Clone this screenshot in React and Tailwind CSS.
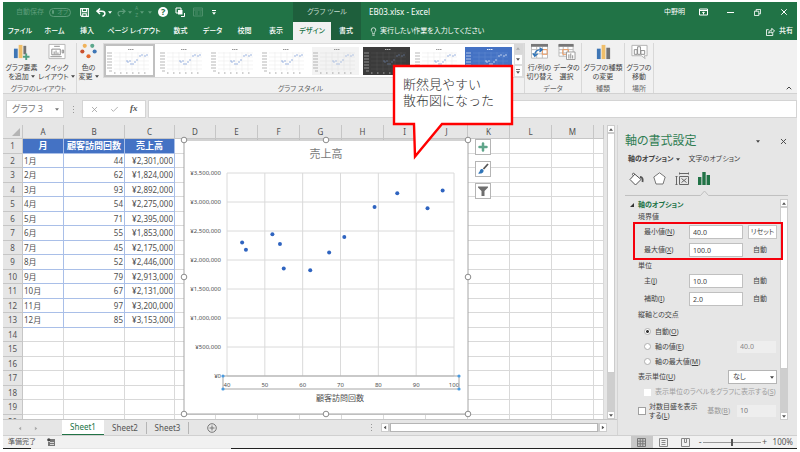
import { ChevronUp, Lightbulb, X, Check, Plus } from 'lucide-react';

const ROWS = [
  ['1月', 44, 2301000],
  ['2月', 62, 1824000],
  ['3月', 93, 2892000],
  ['4月', 54, 2275000],
  ['5月', 71, 2395000],
  ['6月', 55, 1853000],
  ['7月', 45, 2175000],
  ['8月', 52, 2446000],
  ['9月', 79, 2913000],
  ['10月', 67, 2131000],
  ['11月', 97, 3200000],
  ['12月', 85, 3153000],
];

const COLUMNS = ['A', 'B', 'C', 'D', 'E', 'F', 'G', 'H', 'I', 'J', 'K', 'L', 'M', ''];

const yen = (value) => `¥${value.toLocaleString('en-US')}`;

function Caret({ className = '' }) {
  return (
    <svg viewBox="0 0 6 4" className={`inline-block w-[4px] h-[3px] shrink-0 ${className}`} aria-hidden="true">
      <path d="M0 0h6L3 4z" fill="currentColor" />
    </svg>
  );
}

/**
 * Title bar with quick access buttons and the window controls
 */
function TitleBar() {
  return (
    <header className="flex h-[20px] bg-[#217346] text-white text-[8px] leading-[12px]">
      <div className="flex items-center w-[290px] pl-[13px]">
        <label className="flex items-center gap-[5px] text-[7px] text-[#5d9c7a]">
          自動保存
          <button type="button" className="flex items-center gap-[3px] w-[22px] h-[9px] px-[2px] rounded-full border border-[#5d9c7a]">
            <span className="w-[4px] h-[4px] rounded-full bg-[#5d9c7a]" />
            <span className="text-[6px] leading-[7px]">オフ</span>
          </button>
        </label>
        <button type="button" aria-label="上書き保存" className="ml-[9px]">
          <svg viewBox="0 0 10 10" className="w-[9px] h-[9px]" fill="none" stroke="white" strokeWidth="1.2">
            <path d="M.7.7h8.6v8.6H2L.7 8zM2.7 1v3h4.6V1M3 9V6.4h4V9" />
          </svg>
        </button>
        <button type="button" aria-label="元に戻す" className="flex items-center gap-[2px] ml-[7px]">
          <svg viewBox="0 0 10 9" className="w-[10px] h-[9px]" fill="none" stroke="white" strokeWidth="1.5">
            <path d="M4 .5 1 3.2 4 6M1 3.2h5c4 0 3.5 4.5.5 5" />
          </svg>
          <Caret />
        </button>
        <button type="button" aria-label="やり直し" className="flex items-center gap-[2px] ml-[5px] text-[#5d9c7a]">
          <svg viewBox="0 0 10 9" className="w-[9px] h-[9px]" fill="none" stroke="currentColor" strokeWidth="1.3">
            <path d="M6 .5 9 3.2 6 6M9 3.2H4C0 3.2.5 7.7 3.5 8.2" />
          </svg>
          <Caret />
        </button>
        <button type="button" aria-label="並べ替え" className="flex items-center gap-[2px] ml-[3px] text-[#5d9c7a]">
          <span className="flex flex-col text-[5px] leading-[7px]">
            <span>A</span>
            <span>Z</span>
          </span>
          <Caret />
          <Caret className="ml-[2px]" />
        </button>
        <button type="button" aria-label="ヘルプ" className="flex items-center justify-center w-[10px] h-[10px] ml-[6px] rounded-full bg-white text-[#217346] text-[9px] leading-[10px] font-bold">
          ?
        </button>
        <button type="button" aria-label="オブジェクトの選択" className="ml-[7px]">
          <svg viewBox="0 0 10 10" className="w-[10px] h-[10px]">
            <path d="M1 1h5v5H1z" fill="none" stroke="white" />
            <path d="M3 3h4.5v4.5H3z" fill="white" />
            <path d="M6 9.500h3.500V6" fill="none" stroke="white" />
          </svg>
        </button>
        <button type="button" aria-label="フォーム" className="ml-[8px]">
          <svg viewBox="0 0 10 10" className="w-[10px] h-[10px]" fill="none" stroke="#4c8f6a">
            <path d="M.5 1h9v8h-9zM.5 3h9M2 5h3M2 7h3M6.5 5h2M6.5 7h2" />
          </svg>
        </button>
        <button type="button" aria-label="クイック アクセスのカスタマイズ" className="flex flex-col items-center gap-[1px] ml-[9px]">
          <span className="w-[4px] h-px bg-white" />
          <Caret />
        </button>
      </div>
      <div className="flex items-center justify-center w-[68px] bg-[#1e5f3c] text-[7px] text-[#c5dccf]">グラフ ツール</div>
      <h1 className="flex items-center pl-[8px] whitespace-pre">EB03.xlsx - Excel</h1>
      <div className="flex items-center ml-auto pr-[8px]">
        <span className="text-[7px]">中野明</span>
        <button type="button" aria-label="リボンの表示オプション" className="ml-[14px]">
          <svg viewBox="0 0 9 8" className="w-[9px] h-[8px]" fill="none" stroke="white">
            <path d="M.5 1h8v6h-8zM.5 2.5h8M4.5 6.5V4M3.300 5l1.200-1.200L5.700 5" />
          </svg>
        </button>
        <button type="button" aria-label="最小化" className="w-[7px] h-px ml-[19px] bg-white" />
        <button type="button" aria-label="元に戻す (縮小)" className="ml-[20px]">
          <svg viewBox="0 0 8 8" className="w-[7px] h-[7px]" fill="none" stroke="white">
            <path d="M.5 2.5h5v5h-5zM2.5 2.5v-2h5v5h-2" />
          </svg>
        </button>
        <button type="button" aria-label="閉じる" className="ml-[18px]">
          <X className="w-[10px] h-[10px]" strokeWidth={2.4} />
        </button>
      </div>
    </header>
  );
}

/**
 * Ribbon tabs
 */
function RibbonTabs() {
  return (
    <nav className="flex h-[18px] bg-[#217346] text-white text-[7px] leading-[12px] font-medium">
      <button type="button" className="w-[34px]">ファイル</button>
      <button type="button" className="w-[35px]">ホーム</button>
      <button type="button" className="w-[30px]">挿入</button>
      <button type="button" className="w-[64px]">ページ レイアウト</button>
      <button type="button" className="w-[29px]">数式</button>
      <button type="button" className="w-[35px]">データ</button>
      <button type="button" className="w-[29px]">校閲</button>
      <button type="button" className="w-[34px]">表示</button>
      <button type="button" className="w-[38px] bg-[#f1f1f1] text-[#217346]">デザイン</button>
      <button type="button" className="w-[30px] bg-[#1e5f3c]">書式</button>
      <button type="button" className="flex items-center gap-[2px] ml-[8px] font-normal">
        <Lightbulb className="w-[9px] h-[9px]" />
        実行したい作業を入力してください
      </button>
      <button type="button" className="flex items-center gap-[4px] ml-auto mr-[4px]">
        <svg viewBox="0 0 10 10" className="w-[9px] h-[9px]" fill="none" stroke="white">
          <path d="M3 3H.5v6.500h7V7M3 7c0-2.500 1.500-3.500 3.500-3.500V1.500l3 3-3 2.500V5.500C5 5.500 4 6 3 7z" />
        </svg>
        共有
      </button>
    </nav>
  );
}

function RibbonButton({ icon, top, bottom, caret, className }) {
  return (
    <button type="button" className={`flex flex-col items-center ${className}`}>
      {icon}
      <span className="mt-[3px]">{top}</span>
      <span className="flex items-center gap-[2px]">
        {bottom}
        {caret && <Caret />}
      </span>
    </button>
  );
}

function RibbonGroup({ label, className, children }) {
  return (
    <section className={`flex flex-col h-full border-r border-[#d8d8d8] ${className}`}>
      <div className="flex justify-center h-[42px]">{children}</div>
      <h2 className="text-center text-[#666666]">{label}</h2>
    </section>
  );
}

const THUMB_POINTS = [[21, 14], [22, 15], [24, 14], [25, 17], [27, 17], [29, 15], [31, 13], [34, 9], [36, 8], [39, 9], [41, 8]];

function StyleThumb({ style }) {
  const frame = {
    plain: { bg: '#ffffff', grid: '#ececec', dot: '#8fabdd', text: '#999999' },
    soft: { bg: '#f3f3f3', grid: '#e4e4e4', dot: '#a9bde2', text: '#999999' },
    dark: { bg: '#3b3b3b', grid: '#4d4d4d', dot: '#5f6d8a', text: '#b5b5b5' },
    blue: { bg: '#4472c4', grid: '#5e86d0', dot: '#cfdcf3', text: '#e2eaf8' },
  }[style];

  return (
    <svg viewBox="0 0 47 28" className="w-[47px] h-[28px]" aria-hidden="true">
      <rect width="47" height="28" fill={frame.bg} />
      <path d="M8 6h35M8 10h35M8 14h35M8 18h35M8 22h35M14 5v19M20 5v19M26 5v19M32 5v19M38 5v19" stroke={frame.grid} strokeWidth=".6" />
      <path d="M22 2.5h6" stroke={frame.text} strokeWidth="1" strokeDasharray="1.500 .5" />
      <path d="M1 6h5M1 9h5M1 12h5M1 15h5M1 18h5M1 21h5M3 24h3" stroke={frame.text} strokeWidth=".7" />
      <path d="M8 26h35" stroke={frame.text} strokeWidth=".9" strokeDasharray="1.500 4.500" />
      {THUMB_POINTS.map(([x, y]) => (
        <circle key={x} cx={x} cy={y} r=".8" fill={frame.dot} />
      ))}
    </svg>
  );
}

function Bars({ className = '' }) {
  return (
    <svg viewBox="0 0 18 18" className={`w-[17px] h-[17px] ${className}`} aria-hidden="true">
      <path d="M2 6h4v11H2z" fill="#3f76b5" />
      <path d="M7 2h4v15H7z" fill="#f0bf6a" />
      <path d="M12 5h4v12h-4z" fill="#737373" />
    </svg>
  );
}

function Ribbon() {
  return (
    <div className="flex h-[54px] pt-[3px] bg-[#f1f1f1] border-b border-[#d2d2d2] text-[7px] leading-[9px] text-[#444444]">
      <RibbonGroup label="グラフのレイアウト" className="w-[74px] pr-[2px]">
        <RibbonButton
          className="w-[36px]"
          top="グラフ要素"
          bottom="を追加"
          caret
          icon={
            <svg viewBox="0 0 18 18" className="w-[17px] h-[17px]" aria-hidden="true">
              <path d="M1 6h4v10H1z" fill="#3f76b5" />
              <path d="M6 2h4v14H6z" fill="#f0bf6a" />
              <path d="M11 3h3v9h-3z" fill="#737373" />
              <path d="M14 11v7M10.5 14.5h7" stroke="#4fa080" strokeWidth="2" />
            </svg>
          }
        />
        <RibbonButton
          className="w-[34px]"
          top="クイック"
          bottom="レイアウト"
          caret
          icon={
            <svg viewBox="0 0 18 18" className="w-[18px] h-[17px]" fill="none" stroke="#8a8a8a" aria-hidden="true">
              <path d="M.5 1.5h17v15H.5z" fill="white" stroke="#b5b5b5" />
              <path d="M6 3.5h6M3.500 6.500h9v6h-9zM2 14.500h12M14.500 7.500h1.500v3h-1.500z" />
              <path d="M6 9v3M8 8v4M10 10v2" />
            </svg>
          }
        />
      </RibbonGroup>

      <RibbonGroup label="グラフ スタイル" className="w-[448px]">
        <RibbonButton
          className="w-[22px]"
          top="色の"
          bottom="変更"
          caret
          icon={
            <svg viewBox="0 0 18 18" className="w-[17px] h-[17px]" aria-hidden="true">
              <circle cx="5" cy="3" r="2.200" fill="#f0b35c" />
              <circle cx="13" cy="3" r="2.200" fill="#5da88d" />
              <circle cx="2.500" cy="9" r="2.200" fill="#c8502f" />
              <circle cx="15.500" cy="9" r="2.200" fill="#3f76b5" />
              <circle cx="9" cy="14" r="2.200" fill="#e5682d" />
            </svg>
          }
        />
        <div className="flex h-[35px] ml-[3px] bg-white border border-[#dcdcdc]">
          <div className="flex items-center gap-[4px] pr-[2px]">
            <button type="button" aria-label="スタイル 1" className="h-[33px] border-2 border-[#c0c0c0]">
              <StyleThumb style="plain" />
            </button>
            <button type="button" aria-label="スタイル 2"><StyleThumb style="plain" /></button>
            <button type="button" aria-label="スタイル 3"><StyleThumb style="plain" /></button>
            <button type="button" aria-label="スタイル 4"><StyleThumb style="plain" /></button>
            <button type="button" aria-label="スタイル 5"><StyleThumb style="soft" /></button>
            <button type="button" aria-label="スタイル 6"><StyleThumb style="dark" /></button>
            <button type="button" aria-label="スタイル 7"><StyleThumb style="plain" /></button>
            <button type="button" aria-label="スタイル 8"><StyleThumb style="blue" /></button>
          </div>
          <div className="flex flex-col w-[9px] text-[#555555]">
            <button type="button" aria-label="前の行" className="flex flex-1 items-center justify-center bg-[#d8d8d8] text-[#aaaaaa]">
              <Caret className="rotate-180" />
            </button>
            <button type="button" aria-label="次の行" className="flex flex-1 items-center justify-center border border-[#dcdcdc]">
              <Caret />
            </button>
            <button type="button" aria-label="その他" className="flex flex-col flex-1 items-center justify-center gap-[1px] border border-[#dcdcdc]">
              <span className="w-[4px] h-px bg-[#777777]" />
              <Caret />
            </button>
          </div>
        </div>
      </RibbonGroup>

      <RibbonGroup label="データ" className="w-[57px]">
        <RibbonButton
          className="w-[27px]"
          top="行/列の"
          bottom="切り替え"
          icon={
            <svg viewBox="0 0 18 18" className="w-[17px] h-[17px]" fill="none" aria-hidden="true">
              <path d="M.5 2h17v14H.5zM.5 7h17M.5 11.5h17M6 4v12M12 4v12" fill="white" stroke="#b9b9b9" />
              <path d="M0 1h18v3H0z" fill="#777777" />
              <path d="M12 7h5v5h-5z" stroke="#ef9a5d" />
              <path d="M4 13c0-4 2-6 7-6M9 5l3 2-3 2.5M2 11l2 3 3-2.5" stroke="#2f74b8" strokeWidth="1.4" />
            </svg>
          }
        />
        <RibbonButton
          className="w-[27px]"
          top="データの"
          bottom="選択"
          icon={
            <svg viewBox="0 0 18 18" className="w-[18px] h-[17px]" fill="none" aria-hidden="true">
              <path d="M.5 2h15v12H.5zM.5 7h15M.5 10.5h15M5 4v10M10 4v10" fill="white" stroke="#b9b9b9" />
              <path d="M0 1h16v3H0z" fill="#777777" />
              <path d="M4.500 7h6v5h-6z" stroke="#ef9a5d" />
              <path d="M8.500 9.500h9v8h-9z" fill="white" stroke="#999999" />
              <path d="M11 12v4.500M13 11v5.500M15 13v3.500" stroke="#888888" />
            </svg>
          }
        />
      </RibbonGroup>

      <RibbonGroup label="種類" className="w-[43px]">
        <RibbonButton className="w-[40px]" top="グラフの種類" bottom="の変更" icon={<Bars />} />
      </RibbonGroup>

      <RibbonGroup label="場所" className="w-[29px]">
        <RibbonButton
          className="w-[27px]"
          top="グラフの"
          bottom="移動"
          icon={
            <svg viewBox="0 0 18 18" className="w-[17px] h-[17px]" fill="none" stroke="#8a8a8a" aria-hidden="true">
              <path d="M1 2.5h16v11h-3l1 3-4-3H1z" fill="white" stroke="#b0b0b0" />
              <path d="M3.5 7h3v5h-3zM7 4h3v8H7zM10.5 8h4v4h-4z" />
            </svg>
          }
        />
      </RibbonGroup>

      <button type="button" aria-label="リボンを折りたたむ" className="self-end ml-auto mr-[4px] mb-[1px]">
        <ChevronUp className="w-[8px] h-[8px]" strokeWidth={3} />
      </button>
    </div>
  );
}

function FormulaBar() {
  return (
    <div className="flex h-[31px] pt-[6px] pb-[7px] pl-[3px] bg-[#e6e6e6] text-[9px] text-[#777777]">
      <button type="button" className="flex items-center justify-between w-[58px] pl-[5px] pr-[4px] bg-white border border-[#d4d4d4]">
        グラフ 3
        <Caret />
      </button>
      <span className="flex flex-col justify-center gap-[2px] ml-[9px]">
        <span className="w-px h-px bg-[#999999]" />
        <span className="w-px h-px bg-[#999999]" />
        <span className="w-px h-px bg-[#999999]" />
      </span>
      <div className="flex items-center justify-around w-[64px] ml-[8px] px-[2px] bg-white border border-[#d4d4d4]">
        <button type="button" aria-label="キャンセル"><X className="w-[9px] h-[9px] text-[#999999]" /></button>
        <button type="button" aria-label="入力"><Check className="w-[9px] h-[9px] text-[#999999]" /></button>
        <button type="button" aria-label="関数の挿入" className="font-['Liberation_Serif',serif] italic font-bold text-[9px] text-[#555555]">fx</button>
      </div>
      <input aria-label="数式バー" className="flex-1 min-w-0 ml-[2px] bg-white border border-[#d4d4d4]" />
    </div>
  );
}

const GRID_X = [40, 50, 60, 70, 80, 90, 100];
const GRID_Y = [0, 500000, 1000000, 1500000, 2000000, 2500000, 3000000, 3500000];
const HANDLES = [[4, 4], [146, 4], [288, 4], [4, 141], [288, 141], [4, 278], [146, 278], [288, 278]];

const chartX = (value) => 47 + ((value - 40) * 227) / 60;
const chartY = (value) => 240 - (value * 203) / 3500000;

/**
 * Scatter chart: visits on the x axis, sales on the y axis
 */
function ScatterChart() {
  return (
    <svg viewBox="0 0 292 282" className="w-[292px] h-[282px]" role="img" aria-label="売上高">
      <rect x="4" y="4" width="284" height="274" fill="white" stroke="#a6a6a6" />
      <text x="146" y="22" textAnchor="middle" fontSize="11" fill="#7a7a7a">売上高</text>
      <g stroke="#dadada">
        {GRID_X.map((v) => (
          <line key={v} x1={chartX(v)} x2={chartX(v)} y1={chartY(3500000)} y2={chartY(0)} />
        ))}
        {GRID_Y.map((v) => (
          <line key={v} x1={chartX(40)} x2={chartX(100)} y1={chartY(v)} y2={chartY(v)} />
        ))}
      </g>
      <g fontSize="6" fill="#505050">
        {GRID_Y.map((v) => (
          <text key={v} x="41" y={chartY(v) + 2} textAnchor="end">{yen(v)}</text>
        ))}
        {GRID_X.map((v) => (
          <text key={v} x={chartX(v)} y="251" textAnchor="middle">{v}</text>
        ))}
      </g>
      <rect x="43" y="240" width="236" height="13" fill="none" stroke="#a6a6a6" />
      {[[43, 240], [279, 240], [43, 253], [279, 253]].map(([x, y]) => (
        <circle key={`${x}-${y}`} cx={x} cy={y} r="1.6" fill="#4a9be0" />
      ))}
      <text x="160" y="265" textAnchor="middle" fontSize="8" fill="#505050">顧客訪問回数</text>
      {ROWS.map(([month, visits, sales]) => (
        <circle key={month} cx={chartX(visits)} cy={chartY(sales)} r="2" fill="#2f64c0" />
      ))}
      {HANDLES.map(([x, y]) => (
        <circle key={`${x}-${y}`} cx={x} cy={y} r="2.8" fill="white" stroke="#8c8c8c" />
      ))}
    </svg>
  );
}

function SheetRow({ index }) {
  const data = ROWS[index - 2];
  const rest = COLUMNS.slice(3);
  const blank = 'border-r border-b border-[#d9d9d9]';
  const filled = 'border-r border-b border-[#a9bfe8]';
  const head = 'border-r border-b border-[#a9bfe8] bg-[#4472c4] text-white text-[9px] font-bold text-center';

  return (
    <tr className="h-[14px] odd:h-[15px]">
      <th className="border-r border-b border-[#c6c6c6] bg-[#e6e6e6] font-normal text-[#555555]">{index}</th>
      {index === 1 && (
        <>
          <td className={head}>月</td>
          <td className={head}>顧客訪問回数</td>
          <td className={head}>売上高</td>
        </>
      )}
      {data && (
        <>
          <td className={`${filled} pl-px`}>{data[0]}</td>
          <td className={`${filled} text-right pr-px`}>{data[1]}</td>
          <td className={`${filled} text-right pr-px`}>{yen(data[2])}</td>
        </>
      )}
      {index > 13 && (
        <>
          <td className={blank} />
          <td className={blank} />
          <td className={blank} />
        </>
      )}
      {rest.map((name) => (
        <td key={name} className={blank} />
      ))}
    </tr>
  );
}

function ChartButtons() {
  const box = 'flex items-center justify-center w-[16px] h-[16px] bg-white border border-[#b5b5b5]';
  return (
    <div className="absolute left-[472px] top-[14px] flex flex-col gap-[6px]">
      <button type="button" aria-label="グラフ要素" className={box}>
        <Plus className="w-[12px] h-[12px] text-[#5fa58a]" strokeWidth={5} />
      </button>
      <button type="button" aria-label="グラフ スタイル" className={box}>
        <svg viewBox="0 0 12 12" className="w-[12px] h-[12px]">
          <path d="M11 1 6.500 6" stroke="#555555" strokeWidth="1.800" />
          <path d="M6.500 7c-1-1.500-3-1-3.500.5S2 9.500 1 10.500c2.500.5 6 0 5.500-3.500z" fill="#2f74b8" />
        </svg>
      </button>
      <button type="button" aria-label="グラフ フィルター" className={box}>
        <svg viewBox="0 0 12 12" className="w-[12px] h-[12px]">
          <path d="M1 1.500h10v1L7.500 6v5h-3V6L1 2.500z" fill="#6e6e6e" />
        </svg>
      </button>
    </div>
  );
}

function VerticalScroll({ thumb, className = '' }) {
  const arrow = 'flex items-center justify-center w-[8px] h-[8px] bg-white border border-[#cccccc] text-[#555555]';
  return (
    <div className={`flex flex-col w-[8px] shrink-0 bg-[#cecece] ${className}`}>
      <button type="button" aria-label="上へスクロール" className={arrow}><Caret className="rotate-180" /></button>
      <div className={`bg-white border border-[#cccccc] ${thumb}`} />
      <button type="button" aria-label="下へスクロール" className={`${arrow} mt-auto`}><Caret /></button>
    </div>
  );
}

function Sheet() {
  return (
    <main className="flex flex-col flex-1 min-w-0">
      <div className="flex h-[294px]">
        <div className="relative flex-1 min-w-0 overflow-hidden bg-white">
          <table className="w-full table-fixed border-separate border-spacing-0 text-[8px] leading-[12px] text-[#505050]">
            <colgroup>
              <col className="w-[20px]" />
              <col className="w-[41px]" />
              <col className="w-[61px]" />
              <col className="w-[50px]" />
              <col className="w-[41px]" />
              <col className="w-[42px]" />
              <col className="w-[42px]" />
              <col className="w-[42px]" />
              <col className="w-[42px]" />
              <col className="w-[42px]" />
              <col className="w-[42px]" />
              <col className="w-[42px]" />
              <col className="w-[42px]" />
              <col className="w-[42px]" />
              <col />
            </colgroup>
            <thead>
              <tr className="h-[14px]">
                <th className="bg-[#e6e6e6] border-r border-b border-[#c6c6c6]">
                  <svg viewBox="0 0 8 8" className="w-[8px] h-[8px] ml-auto mr-[2px]" aria-hidden="true">
                    <path d="M8 0v8H0z" fill="#b4b4b4" />
                  </svg>
                </th>
                {COLUMNS.map((name) => (
                  <th key={name} className="bg-[#e6e6e6] border-r border-b border-[#c6c6c6] font-normal">{name}</th>
                ))}
              </tr>
            </thead>
            <tbody>
              {Array.from({ length: 20 }, (_, i) => (
                <SheetRow key={i} index={i + 1} />
              ))}
            </tbody>
          </table>
          <div className="absolute left-[177px] top-[11px]">
            <ScatterChart />
          </div>
          <ChartButtons />
        </div>
        <VerticalScroll thumb="h-[240px]" className="ml-[3px] mr-[2px]" />
      </div>

      <div className="flex items-center h-[16px] border-t border-[#c6c6c6] text-[8px] text-[#555555]">
        <button type="button" aria-label="前のシート" className="ml-[15px] text-[#aaaaaa]"><Caret className="rotate-90" /></button>
        <button type="button" aria-label="次のシート" className="ml-[12px] text-[#aaaaaa]"><Caret className="-rotate-90" /></button>
        <button type="button" className="self-stretch w-[42px] ml-[24px] bg-white border-b border-[#217346] text-[#217346]">Sheet1</button>
        <button type="button" className="w-[43px] border-r border-[#b5b5b5]">Sheet2</button>
        <button type="button" className="w-[42px] border-r border-[#b5b5b5]">Sheet3</button>
        <button type="button" aria-label="新しいシート" className="ml-[18px]">
          <svg viewBox="0 0 10 10" className="w-[10px] h-[10px]" fill="none" stroke="#777777">
            <circle cx="5" cy="5" r="4.3" />
            <path d="M5 2.5v5M2.5 5h5" />
          </svg>
        </button>
        <span className="flex flex-col gap-[2px] ml-auto mr-[9px]">
          <span className="w-px h-px bg-[#999999]" />
          <span className="w-px h-px bg-[#999999]" />
          <span className="w-px h-px bg-[#999999]" />
        </span>
        <div className="flex w-[226px] h-[9px] mr-[10px] bg-[#cecece]">
          <button type="button" aria-label="左へスクロール" className="flex items-center justify-center w-[8px] bg-white border border-[#cccccc]">
            <Caret className="rotate-90" />
          </button>
          <div className="w-[208px] ml-px bg-white border border-[#b5b5b5]" />
          <button type="button" aria-label="右へスクロール" className="flex items-center justify-center w-[8px] ml-auto bg-white border border-[#cccccc]">
            <Caret className="-rotate-90" />
          </button>
        </div>
      </div>
    </main>
  );
}

function ValueRow({ id, label, accessKey, value, reset }) {
  return (
    <div className="flex items-center h-[14px] pl-[27px]">
      <label htmlFor={id} className="w-[45px]">{label}(<u>{accessKey}</u>)</label>
      <input id={id} defaultValue={value} className="w-[54px] h-[14px] px-[3px] bg-white border border-[#c0c0c0]" />
      {reset ? (
        <button type="button" className="w-[29px] h-[14px] ml-[5px] bg-white border border-[#c6c6c6]">リセット</button>
      ) : (
        <span className="w-[29px] ml-[5px] pl-[5px]">自動</span>
      )}
    </div>
  );
}

function CrossOption({ label, accessKey, checked, children }) {
  return (
    <div className="flex items-center h-[15px] pl-[27px]">
      <label className="flex items-center gap-[4px]">
        <input
          type="radio"
          name="cross"
          defaultChecked={checked}
          className="appearance-none w-[7px] h-[7px] rounded-full border border-[#b0b0b0] bg-white checked:bg-[radial-gradient(#333333_35%,white_45%)]"
        />
        <span>{label}(<u>{accessKey}</u>)</span>
      </label>
      {children}
    </div>
  );
}

/**
 * Side panel with the axis settings
 */
function FormatPanel() {
  return (
    <aside className="flex flex-col w-[180px] pt-[8px] pl-[7px] pr-[9px] border-l border-[#d4d4d4] text-[7px] leading-[12px] text-[#444444]">
      <div className="flex items-center h-[16px]">
        <h2 className="text-[12px] leading-[16px] text-[#2f7d52]">軸の書式設定</h2>
        <Caret className="ml-auto mr-[19px]" />
        <button type="button" aria-label="閉じる"><X className="w-[9px] h-[9px]" strokeWidth={2.5} /></button>
      </div>
      <div className="flex items-center h-[12px] mt-[4px] pl-[3px]">
        <button type="button" className="font-bold">軸のオプション</button>
        <Caret className="ml-[2px]" />
        <button type="button" className="ml-[9px]">文字のオプション</button>
      </div>
      <div className="flex items-center h-[15px] gap-[9px] mt-[6px] pl-[4px]">
        <button type="button" aria-label="塗りつぶしと線">
          <svg viewBox="0 0 15 14" className="w-[15px] h-[14px]" fill="none" stroke="#555555">
            <path d="M6 2 1 7.5 6.5 13 12 7.5 5 1.5c-1.5-1-2 1-1 2" fill="white" />
            <path d="M11 5c2.5 0 3 2 2.5 5" strokeWidth="1.800" />
          </svg>
        </button>
        <button type="button" aria-label="効果">
          <svg viewBox="0 0 13 13" className="w-[13px] h-[13px]" fill="white" stroke="#777777">
            <path d="M6.5.8 12.2 5l-2.2 7H3L.8 5z" />
          </svg>
        </button>
        <button type="button" aria-label="サイズとプロパティ">
          <svg viewBox="0 0 14 14" className="w-[14px] h-[14px]" fill="none" stroke="#666666">
            <path d="M4.5 4.500h9v8h-9zM6.500 6.500l5 4M11.500 6.500l-5 4M4 1.500h9.500M4.500.5v2M13.500.5v2M1.500 4v8M.5 4.500h2M.5 12.500h2" />
          </svg>
        </button>
        <button type="button" aria-label="軸のオプション">
          <svg viewBox="0 0 12 13" className="w-[12px] h-[13px]" fill="#217346">
            <path d="M0 5h3.400v8H0zM4.300 0h3.400v13H4.300zM8.600 3H12v10H8.600z" />
          </svg>
        </button>
      </div>
      <svg viewBox="0 0 164 6" className="w-full h-[6px] mt-[4px] shrink-0" fill="none" stroke="#c0c0c0" aria-hidden="true">
        <path d="M0 5.500h76l4-4.500 4 4.500h80" />
      </svg>

      <div className="flex mt-[3px]">
        <form className="flex-1 min-w-0 whitespace-nowrap" onSubmit={(e) => e.preventDefault()}>
          <h3 className="flex items-center gap-[4px] h-[12px] pl-[5px] font-bold text-[#217346]">
            <svg viewBox="0 0 4 4" className="w-[4px] h-[4px]" aria-hidden="true"><path d="M4 0v4H0z" fill="#333333" /></svg>
            軸のオプション
          </h3>
          <h4 className="h-[12px] pl-[13px]">境界値</h4>
          <div className="relative -ml-[8px] mt-[2px] flex flex-col gap-[4px] w-[164px]">
            <div className="absolute left-[16px] -right-[2px] -top-[3px] -bottom-[3px] border-2 border-[#f5000c] pointer-events-none" />
            <ValueRow id="min" label="最小値" accessKey="N" value="40.0" reset />
            <ValueRow id="max" label="最大値" accessKey="X" value="100.0" />
          </div>
          <h4 className="h-[12px] mt-[3px] pl-[13px]">単位</h4>
          <div className="-ml-[8px] mt-[2px] flex flex-col gap-[4px]">
            <ValueRow id="major" label="主" accessKey="J" value="10.0" />
            <ValueRow id="minor" label="補助" accessKey="I" value="2.0" />
          </div>
          <h4 className="h-[12px] mt-[3px] pl-[13px]">縦軸との交点</h4>
          <div className="-ml-[8px] mt-[3px]">
            <CrossOption label="自動" accessKey="O" checked />
            <CrossOption label="軸の値" accessKey="E">
              <input disabled aria-label="軸の値" defaultValue="40.0" className="w-[39px] h-[12px] ml-auto mr-[4px] px-[3px] bg-[#eeeeee] text-[#888888]" />
            </CrossOption>
            <CrossOption label="軸の最大値" accessKey="M" />
          </div>
          <div className="flex items-center h-[14px] mt-px pl-[13px] pr-[3px]">
            <label htmlFor="unit">表示単位(<u>U</u>)</label>
            <div className="relative w-[49px] ml-auto">
              <select id="unit" className="appearance-none block w-full h-[14px] pl-[4px] bg-white border border-[#b5b5b5]">
                <option>なし</option>
              </select>
              <Caret className="absolute right-[3px] top-[6px] pointer-events-none" />
            </div>
          </div>
          <label className="flex items-center gap-[4px] h-[14px] mt-px pl-[19px] text-[#a0a0a0]">
            <input type="checkbox" disabled className="appearance-none w-[7px] h-[7px] bg-white" />
            <span>表示単位のラベルをグラフに表示する(<u>S</u>)</span>
          </label>
          <div className="flex items-center h-[18px] mt-[3px] pl-[13px] pr-[4px]">
            <label className="flex items-center gap-[3px] leading-[9px]">
              <input type="checkbox" className="appearance-none w-[8px] h-[8px] bg-white border border-[#a0a0a0]" />
              <span>対数目盛を表示<br />する(<u>L</u>)</span>
            </label>
            <label htmlFor="base" className="ml-auto mr-[7px] text-[#999999]">基数(<u>B</u>)</label>
            <input id="base" disabled defaultValue="10" className="w-[39px] h-[12px] px-[3px] bg-[#eeeeee] text-[#777777]" />
          </div>
        </form>
        <VerticalScroll thumb="h-[162px]" />
      </div>
    </aside>
  );
}

function StatusBar() {
  return (
    <footer className="flex items-center h-[13px] pl-[5px] pr-[4px] bg-[#f1f1f1] border-t border-[#d0d0d0] text-[7px] text-[#555555]">
      準備完了
      <svg viewBox="0 0 8 8" className="w-[8px] h-[8px] ml-[11px]" aria-hidden="true">
        <path d="M3 1h5v7H1V4h2z" fill="#777777" />
        <circle cx="1.800" cy="1.800" r="1.600" fill="#444444" />
        <path d="M3 4.500h4M3 6.500h4" stroke="white" strokeWidth=".7" />
      </svg>
      <div className="flex items-center self-stretch ml-auto">
        <button type="button" aria-label="標準" className="flex items-center justify-center self-stretch w-[22px] bg-[#c8c8c8]">
          <svg viewBox="0 0 9 9" className="w-[9px] h-[9px]" fill="none" stroke="#777777">
            <path d="M.5.5h8v8h-8zM.5 3.200h8M.5 5.800h8M3.200.5v8M5.800.5v8" />
          </svg>
        </button>
        <button type="button" aria-label="ページ レイアウト" className="ml-[6px]">
          <svg viewBox="0 0 9 9" className="w-[9px] h-[9px]" fill="none" stroke="#888888">
            <path d="M.5.5h8v8h-8zM2.500 2.500h4M2.500 4.500h4M2.500 6.500h4" />
          </svg>
        </button>
        <button type="button" aria-label="改ページ プレビュー" className="ml-[13px]">
          <svg viewBox="0 0 9 9" className="w-[9px] h-[9px]" fill="none" stroke="#888888">
            <path d="M.5.5h8v8h-8zM3.500.5v4h2v-4" />
          </svg>
        </button>
        <button type="button" aria-label="縮小" className="ml-[8px] w-[5px] text-[9px] leading-[10px]">-</button>
        <input
          type="range"
          aria-label="ズーム"
          defaultValue="50"
          className="appearance-none w-[58px] h-[8px] bg-transparent bg-[linear-gradient(#999999,#999999)] bg-[length:100%_1px] bg-center bg-no-repeat [&::-webkit-slider-thumb]:appearance-none [&::-webkit-slider-thumb]:w-[2px] [&::-webkit-slider-thumb]:h-[7px] [&::-webkit-slider-thumb]:bg-[#555555]"
        />
        <button type="button" aria-label="拡大" className="w-[8px] text-[9px] leading-[10px]">+</button>
        <span className="ml-[4px] text-[8px]">100%</span>
      </div>
    </footer>
  );
}

function Callout() {
  return (
    <div className="absolute left-[392px] top-[64px] text-[#333333]">
      <svg viewBox="0 0 122 96" className="w-[122px] h-[96px]" aria-hidden="true">
        <path d="M2 2h118v58H50L23 92.500 22 60H2z" fill="white" stroke="#ff0000" strokeWidth="2.400" />
      </svg>
      <p className="absolute left-[11px] top-[12px] text-[13px] leading-[16px] font-light [font-feature-settings:normal]">
        断然見やすい
        <br />
        散布図になった
      </p>
    </div>
  );
}

export default function App() {
  return (
    <div className="relative px-[3px] pt-[2px] bg-white font-['Noto_Sans','Noto_Sans_CJK_JP',sans-serif] [font-feature-settings:'palt'] whitespace-nowrap">
      <TitleBar />
      <RibbonTabs />
      <Ribbon />
      <FormulaBar />
      <div className="flex bg-[#e6e6e6]">
        <Sheet />
        <FormatPanel />
      </div>
      <StatusBar />
      <div className="flex h-px">
        <div className="w-[28px] bg-[#222222]" />
        <div className="w-[200px] bg-[#e6e6e6]" />
        <div className="flex-1 bg-[#222222]" />
      </div>
      <Callout />
    </div>
  );
}
